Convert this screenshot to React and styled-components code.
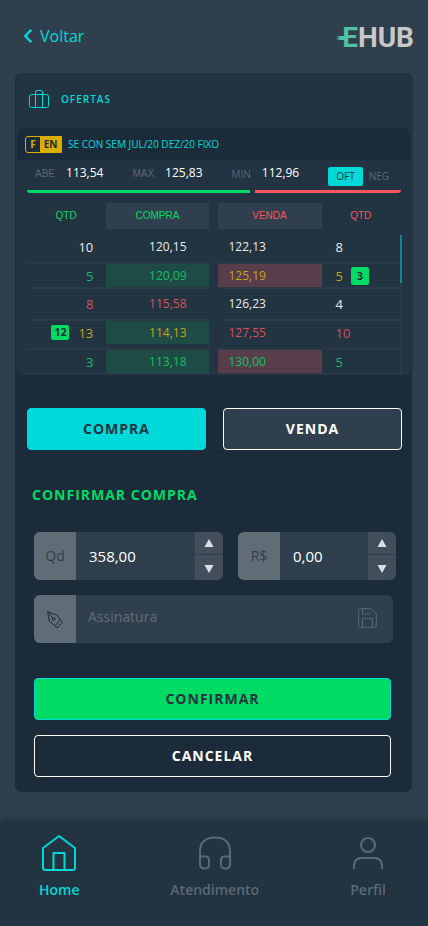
import React, { useState } from 'react'
import styled, { createGlobalStyle, ThemeProvider } from 'styled-components'

const theme = {
  page: '#303f4d',
  card: '#1c2b39',
  panel: '#223341',
  cyan: '#00d9d9',
  green: '#00db66',
  red: '#f5565b',
  yellow: '#d9ae00',
  muted: '#5c6873',
  tag: '#606d76',
  line: '#2a3945',
  text: '#223341',
  row: {
    white: '#e9ebec',
    green: '#10c064',
    red: '#d8525a',
    yellow: '#c6a512',
  },
  fill: {
    buy: '#1e4b45',
    sell: '#583e4a',
  },
}

const GlobalStyle = createGlobalStyle`
  * {
    box-sizing: border-box;
  }
  body {
    margin: 0;
    background: #303f4d;
    font-family: 'Open Sans', 'Noto Sans', sans-serif;
    color: #fff;
  }
  button, input {
    font-family: inherit;
    margin: 0;
  }
  svg {
    display: block;
  }
`

const Page = styled.div`
  min-height: 100vh;
  display: flex;
  flex-direction: column;
`

const Header = styled.header`
  display: flex;
  align-items: center;
  justify-content: space-between;
  height: 73px;
  padding: 0 14px 2px 24px;
`

const Back = styled.a`
  display: flex;
  align-items: center;
  gap: 8px;
  color: ${props => props.theme.cyan};
  font-size: 16px;
  line-height: 24px;
  text-decoration: none;
`

const Logo = styled.div`
  display: flex;
  align-items: center;
  font-family: Roboto, sans-serif;
  font-size: 28px;
  font-weight: 700;
  line-height: 32px;
  color: #c8c8c8;
  padding-top: 4px;
  span {
    color: #52bfa6;
  }
  &::before {
    content: '';
    width: 10px;
    height: 4px;
    margin-right: -4px;
    background: linear-gradient(to right, transparent, #52bfa6 40%);
  }
`

const Card = styled.main`
  margin: 0 16px 28px 15px;
  padding-bottom: 15px;
  border-radius: 7px;
  background: ${props => props.theme.card};
`

const Panel = styled.section`
  margin: 0 -1px 0 1px;
  border-radius: 7px;
  background: ${props => props.theme.panel};
`

const PanelTitle = styled.h2`
  display: flex;
  align-items: center;
  gap: 12px;
  height: 55px;
  margin: 0;
  padding: 0 13px 4px;
  color: ${props => props.theme.cyan};
  font-size: 10px;
  font-weight: 600;
  letter-spacing: 1px;
`

const Instrument = styled.div`
  display: flex;
  align-items: center;
  gap: 6px;
  height: 32px;
  margin: 0 3px 0 1px;
  padding: 0 8px;
  border-radius: 7px 7px 0 0;
  background: ${props => props.theme.card};
  color: ${props => props.theme.cyan};
  font-size: 10px;
`

const Tag = styled.span`
  display: flex;
  height: 17px;
  border: 1px solid ${props => props.theme.yellow};
  border-radius: 3px 0 0 3px;
  color: ${props => props.theme.yellow};
  font-size: 10px;
  font-weight: 700;
  line-height: 14px;
  span {
    width: 14px;
    text-align: center;
  }
  span + span {
    width: 21px;
    background: ${props => props.theme.yellow};
    color: ${props => props.theme.card};
  }
`

const Stats = styled.div`
  display: flex;
  align-items: center;
  justify-content: space-between;
  height: 30px;
  padding: 0 24px 0 19px;
`

const Stat = styled.div`
  display: flex;
  align-items: center;
  gap: 11px;
  padding-bottom: 5px;
  font-size: 12px;
  line-height: 16px;
  span {
    padding-top: 3px;
    color: ${props => props.theme.muted};
    font-family: ${props => (props.$plain ? 'inherit' : "'Liberation Sans', Arial, sans-serif")};
    font-size: 10px;
  }
`

const Mode = styled.div`
  display: flex;
  align-items: center;
  gap: 6px;
  padding-top: 3px;
`

const ModeButton = styled.button`
  height: 19px;
  padding: ${props => (props.$active ? '0 8px' : 0)};
  border: 0;
  border-radius: 2px;
  background: ${props => (props.$active ? props.theme.cyan : 'transparent')};
  color: ${props => (props.$active ? props.theme.text : props.theme.muted)};
  font-size: 10px;
  line-height: 19px;
`

const Balance = styled.div`
  display: flex;
  gap: 5px;
  height: 13px;
  padding: 0 12px 0 11px;
`

const BalanceBar = styled.div`
  flex: ${props => props.$share};
  height: 3px;
  border-radius: ${props => (props.$side === 'buy' ? '0 0 0 3px' : '0 0 3px 0')};
  background: ${props => (props.$side === 'buy' ? props.theme.green : props.theme.red)};
`

const Books = styled.div`
  display: flex;
  padding: 0 11px 0 10px;
`

const Book = styled.table`
  flex: 1;
  width: 100%;
  border-collapse: collapse;
  table-layout: fixed;
  & + & {
    margin-left: 9px;
  }
  th, td {
    padding: 0;
    vertical-align: top;
  }
  th:${props => (props.$side === 'buy' ? 'last-child' : 'first-child')} {
    width: ${props => (props.$side === 'buy' ? 56 : 57)}%;
  }
`

const Heading = styled.div`
  height: 26px;
  margin-bottom: 6px;
  background: ${props => (props.$price ? props.theme.page : 'transparent')};
  color: ${props => (props.$side === 'buy' ? props.theme.green : props.theme.red)};
  font-family: 'Liberation Sans', Arial, sans-serif;
  font-size: 10px;
  font-weight: 400;
  line-height: 26px;
`

const BookRow = styled.tr`
  height: ${props => props.$height}px;
  border-bottom: 2px solid ${props => props.theme.line};
  color: ${props => props.theme.row[props.$color]};
  && td {
    vertical-align: ${props => (props.$height > 30 ? 'middle' : 'top')};
  }
`

const Cell = styled.div`
  display: flex;
  align-items: center;
  justify-content: ${props => (props.$side === 'buy' ? 'flex-end' : 'flex-start')};
  height: 23px;
  line-height: 22px;
`

const Quantity = styled(Cell)`
  gap: ${props => (props.$side === 'buy' ? 9 : 8)}px;
  padding: 0 13px 0 14px;
  font-size: 13px;
`

const Price = styled(Cell)`
  padding: 0 22px 0 11px;
  background: ${props => (props.$filled ? props.theme.fill[props.$side] : 'transparent')};
  font-size: 12px;
`

const Mine = styled.span`
  width: 18px;
  height: ${props => (props.$side === 'buy' ? 15 : 18)}px;
  border-radius: 2px;
  background: ${props => props.theme.green};
  color: ${props => props.theme.text};
  font-size: 11px;
  font-weight: 700;
  line-height: ${props => (props.$side === 'buy' ? 14 : 17)}px;
  text-align: center;
`

const Rail = styled.div`
  width: 2px;
  margin-top: 32px;
  background: ${props => props.theme.line};
  &::before {
    content: '';
    display: block;
    height: 48px;
    background: #0e888e;
  }
`

const Button = styled.button`
  flex: 1;
  height: 42px;
  padding: 0 0 2px;
  border: 1px solid ${props => (props.$tone ? props.theme.cyan : '#fff')};
  border-radius: 4px;
  background: ${props => props.theme[props.$tone || props.$ground]};
  color: ${props => (props.$tone ? props.theme.text : '#fff')};
  font-size: 14px;
  font-weight: 700;
  letter-spacing: 1px;
`

const Sides = styled.div`
  display: flex;
  gap: 17px;
  padding: 33px 10px 0 12px;
`

const Form = styled.form`
  padding: 35px 16px 0 19px;
`

const FormTitle = styled.h1`
  margin: 0 0 27px -2px;
  color: ${props => props.theme.green};
  font-size: 14px;
  font-weight: 700;
  letter-spacing: 1px;
  line-height: 20px;
`

const Amounts = styled.div`
  display: flex;
  gap: 15px;
  margin-bottom: 15px;
`

const Field = styled.div`
  display: flex;
  flex: ${props => props.$grow || 1} 1 0;
  min-width: 0;
  height: 48px;
  border-radius: 6px;
  overflow: hidden;
  background: ${props => props.theme.page};
  label {
    display: flex;
    flex: none;
    align-items: center;
    justify-content: center;
    width: 42px;
    padding-bottom: 2px;
    background: ${props => props.theme.tag};
    color: ${props => props.theme.page};
    font-size: 14px;
  }
  input {
    flex: 1;
    min-width: 0;
    padding: 0 13px 1px;
    border: 0;
    outline: none;
    background: transparent;
    color: #fff;
    font-size: 15px;
  }
`

const Signature = styled(Field)`
  margin-right: 3px;
  label {
    padding-bottom: 0;
    color: ${props => props.theme.card};
  }
  input {
    padding: 0 12px 5px;
    font-size: 14px;
  }
  input::placeholder {
    color: ${props => props.theme.tag};
    opacity: 1;
  }
`

const Stepper = styled.div`
  display: flex;
  flex-direction: column;
  gap: 1px;
  width: 28px;
  button {
    display: flex;
    flex: 1;
    align-items: center;
    justify-content: center;
    padding: 0;
    border: 0;
    background: #424f5b;
  }
  button + button {
    padding-top: 4px;
  }
`

const SaveButton = styled.button`
  padding: 0 16px 2px;
  border: 0;
  background: transparent;
  color: ${props => props.theme.muted};
`

const Actions = styled.div`
  display: flex;
  flex-direction: column;
  gap: 15px;
  padding: 35px 5px 0 0;
  button {
    flex: none;
  }
`

const Nav = styled.nav`
  display: flex;
  justify-content: space-between;
  height: 106px;
  margin-top: auto;
  padding: 13px 42px 0 39px;
  border-radius: 5px;
  background: ${props => props.theme.panel};
  box-shadow: 0 0 5px rgba(34, 40, 44, 0.9);
`

const NavItem = styled.a`
  display: flex;
  flex-direction: column;
  align-items: center;
  gap: 10px;
  color: ${props => (props.$active ? props.theme.cyan : props.theme.muted)};
  font-size: 14px;
  font-weight: 600;
  line-height: 18px;
  text-decoration: none;
`

const Icon = ({ width, height, stroke = 1, children }) => (
  <svg
    width={width}
    height={height}
    viewBox={`0 0 ${width} ${height}`}
    fill="none"
    stroke="currentColor"
    strokeWidth={stroke}
    strokeLinejoin="round"
    aria-hidden="true"
  >
    {children}
  </svg>
)

const Chevron = () => (
  <Icon width={8} height={14} stroke={2.4}>
    <path d="M7.3 .8 1.2 7l6.1 6.2" />
  </Icon>
)

const Briefcase = () => (
  <Icon width={20} height={18}>
    <rect x=".5" y="4.5" width="19" height="13" rx="2" />
    <path d="M6.5 17.5V2q0-1.500 1.500-1.500h4q1.500 0 1.500 1.500v15.500" />
  </Icon>
)

const PenNib = () => (
  <Icon width={18} height={19}>
    <path d="M1.700 1.700 11.300 5.300 14.300 10 9 15.700 3.300 11.300Z" />
    <path d="M1.700 1.700 6.800 8.100M14.300 10l2.300 2-5.500 6L9 15.700" />
    <circle cx="7.700" cy="9" r="1.400" />
  </Icon>
)

const Disk = () => (
  <Icon width={19} height={20}>
    <path d="M2.500.7H13L18.300 6v11.300q0 2-2 2h-13.600q-2 0-2-2V2.700q0-2 2-2Z" />
    <path d="M4.500.7v5.300h8.500M4.500 19.300v-8.600h10v8.600" />
  </Icon>
)

const Arrow = ({ down }) => (
  <svg width="10" height="8" viewBox="0 0 10 8" fill="#dcdedf" aria-hidden="true">
    <path d={down ? 'M.5 0h9L5 8Z' : 'M.5 8h9L5 0Z'} />
  </svg>
)

const House = () => (
  <Icon width={36} height={38} stroke={2}>
    <path d="M2 15 18 3 34 15v19.500q0 2.500-2.500 2.500h-27Q2 37 2 34.500Z" />
    <path d="M12.500 37V20h11v17" />
  </Icon>
)

const Headphones = () => (
  <Icon width={36} height={38} stroke={2}>
    <path d="M3 31V19Q3 4.500 18 4.500T33 19v12" />
    <path d="M3 23.500h5.500q3.500 0 3.500 3.500v4.500q0 4-4.500 4T3 31.500ZM33 23.500h-5.500q-3.500 0-3.500 3.500v4.500q0 4 4.500 4t4.500-4Z" />
  </Icon>
)

const Person = () => (
  <Icon width={36} height={38} stroke={2}>
    <circle cx="18" cy="12" r="7" />
    <path d="M4 36v-3q0-8 8-8h12q8 0 8 8v3" />
  </Icon>
)

const heights = [28, 25, 32, 29, 25]

const bids = [
  { quantity: 10, price: '120,15', color: 'white' },
  { quantity: 5, price: '120,09', color: 'green', filled: true },
  { quantity: 8, price: '115,58', color: 'red' },
  { quantity: 13, price: '114,13', color: 'yellow', filled: true, mine: 12 },
  { quantity: 3, price: '113,18', color: 'green', filled: true },
]

const asks = [
  { quantity: 8, price: '122,13', color: 'white' },
  { quantity: 5, price: '125,19', color: 'yellow', filled: true, mine: 3 },
  { quantity: 4, price: '126,23', color: 'white' },
  { quantity: 10, price: '127,55', color: 'red' },
  { quantity: 5, price: '130,00', color: 'green', filled: true },
]

const OfferBook = ({ side, offers }) => {
  const order = cells => (side === 'buy' ? cells : [...cells].reverse())
  return (
    <Book $side={side}>
      <thead>
        <tr>
          {order([
            <th key="quantity"><Heading $side={side}>QTD</Heading></th>,
            <th key="price">
              <Heading $side={side} $price>{side === 'buy' ? 'COMPRA' : 'VENDA'}</Heading>
            </th>,
          ])}
        </tr>
      </thead>
      <tbody>
        {offers.map((offer, i) => (
          <BookRow key={offer.price} $height={heights[i]} $color={offer.color}>
            {order([
              <td key="quantity">
                <Quantity $side={side}>
                  {order([
                    offer.mine && <Mine key="mine" $side={side}>{offer.mine}</Mine>,
                    <span key="total">{offer.quantity}</span>,
                  ])}
                </Quantity>
              </td>,
              <td key="price">
                <Price $side={side} $filled={offer.filled}>{offer.price}</Price>
              </td>,
            ])}
          </BookRow>
        ))}
      </tbody>
    </Book>
  )
}

const format = value => value.toFixed(2).replace('.', ',')

const AmountField = ({ id, label, name, grow, initial }) => {
  const [value, setValue] = useState(initial)
  const step = by => {
    const current = parseFloat(value.replace(',', '.')) || 0
    setValue(format(Math.max(0, current + by)))
  }
  return (
    <Field $grow={grow}>
      <label htmlFor={id}>{label}</label>
      <input id={id} inputMode="decimal" value={value} onChange={e => setValue(e.target.value)} />
      <Stepper>
        <button type="button" aria-label={`Aumentar ${name}`} onClick={() => step(1)}><Arrow /></button>
        <button type="button" aria-label={`Diminuir ${name}`} onClick={() => step(-1)}><Arrow down /></button>
      </Stepper>
    </Field>
  )
}

const App = () => (
  <ThemeProvider theme={theme}>
    <GlobalStyle />
    <Page>
      <Header>
        <Back href="#voltar"><Chevron />Voltar</Back>
        <Logo><span>E</span>HUB</Logo>
      </Header>
      <Card>
        <Panel>
          <PanelTitle><Briefcase />OFERTAS</PanelTitle>
          <Instrument>
            <Tag><span>F</span><span>EN</span></Tag>
            SE CON SEM JUL/20 DEZ/20 FIXO
          </Instrument>
          <Stats>
            <Stat><span>ABE</span>113,54</Stat>
            <Stat><span>MAX</span>125,83</Stat>
            <Stat $plain><span>MIN</span>112,96</Stat>
            <Mode>
              <ModeButton type="button" $active>OFT</ModeButton>
              <ModeButton type="button">NEG</ModeButton>
            </Mode>
          </Stats>
          <Balance>
            <BalanceBar $side="buy" $share={223} />
            <BalanceBar $side="sell" $share={146} />
          </Balance>
          <Books>
            <OfferBook side="buy" offers={bids} />
            <OfferBook side="sell" offers={asks} />
            <Rail />
          </Books>
        </Panel>
        <Sides>
          <Button type="button" $tone="cyan">COMPRA</Button>
          <Button type="button" $ground="page">VENDA</Button>
        </Sides>
        <Form onSubmit={e => e.preventDefault()}>
          <FormTitle>CONFIRMAR COMPRA</FormTitle>
          <Amounts>
            <AmountField id="quantity" label="Qd" name="quantidade" grow={189} initial="358,00" />
            <AmountField id="price" label="R$" name="preço" grow={158} initial="0,00" />
          </Amounts>
          <Signature>
            <label htmlFor="signature" aria-label="Assinatura"><PenNib /></label>
            <input id="signature" type="password" placeholder="Assinatura" />
            <SaveButton type="button" aria-label="Salvar assinatura"><Disk /></SaveButton>
          </Signature>
          <Actions>
            <Button type="submit" $tone="green">CONFIRMAR</Button>
            <Button type="button" $ground="card">CANCELAR</Button>
          </Actions>
        </Form>
      </Card>
      <Nav>
        <NavItem href="#home" $active><House />Home</NavItem>
        <NavItem href="#atendimento"><Headphones />Atendimento</NavItem>
        <NavItem href="#perfil"><Person />Perfil</NavItem>
      </Nav>
    </Page>
  </ThemeProvider>
)

export default App
